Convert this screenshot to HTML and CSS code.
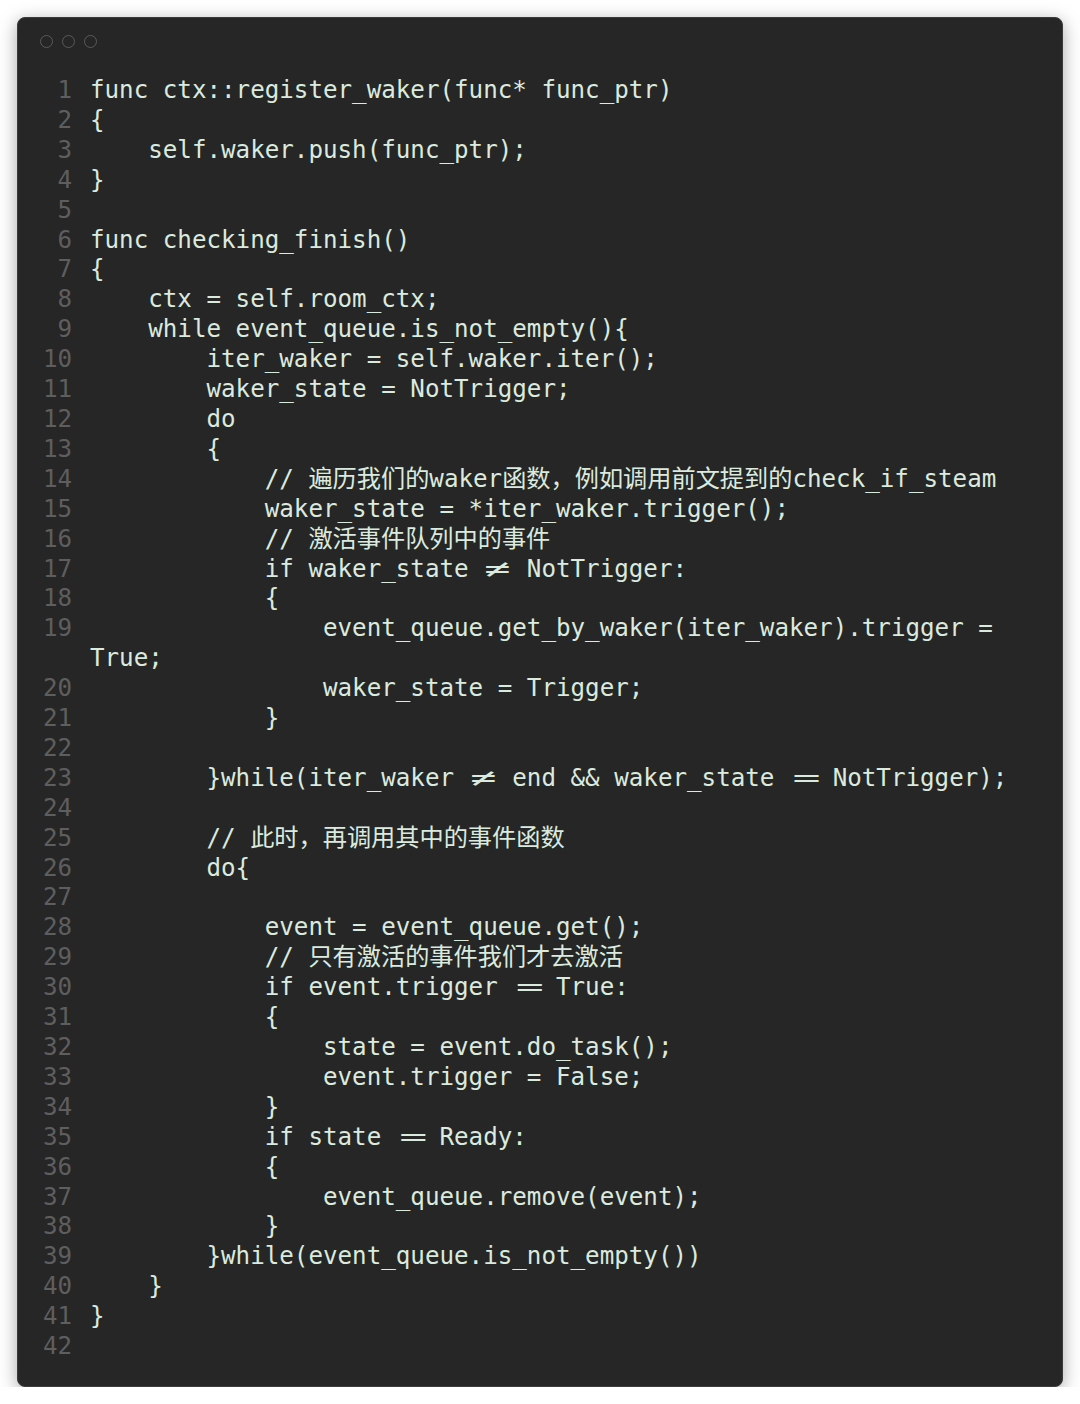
FILE: index.html
```html
<!DOCTYPE html>
<html lang="zh">
<head>
<meta charset="utf-8">
<title>code</title>
<link rel="stylesheet" href="styles.css">
</head>
<body>
<div class="window">
  <div class="titlebar">
    <span class="dot"></span><span class="dot"></span><span class="dot"></span>
  </div>
  <div class="code">
    <div class="row"><span class="n">1</span><span class="c">func ctx::register_waker(func* func_ptr)</span></div>
    <div class="row"><span class="n">2</span><span class="c">{</span></div>
    <div class="row"><span class="n">3</span><span class="c">    self.waker.push(func_ptr);</span></div>
    <div class="row"><span class="n">4</span><span class="c">}</span></div>
    <div class="row"><span class="n">5</span><span class="c"> </span></div>
    <div class="row"><span class="n">6</span><span class="c">func checking_finish()</span></div>
    <div class="row"><span class="n">7</span><span class="c">{</span></div>
    <div class="row"><span class="n">8</span><span class="c">    ctx = self.room_ctx;</span></div>
    <div class="row"><span class="n">9</span><span class="c">    while event_queue.is_not_empty(){</span></div>
    <div class="row"><span class="n">10</span><span class="c">        iter_waker = self.waker.iter();</span></div>
    <div class="row"><span class="n">11</span><span class="c">        waker_state = NotTrigger;</span></div>
    <div class="row"><span class="n">12</span><span class="c">        do</span></div>
    <div class="row"><span class="n">13</span><span class="c">        {</span></div>
    <div class="row"><span class="n">14</span><span class="c">            // 遍历我们的waker函数，例如调用前文提到的check_if_steam</span></div>
    <div class="row"><span class="n">15</span><span class="c">            waker_state = *iter_waker.trigger();</span></div>
    <div class="row"><span class="n">16</span><span class="c">            // 激活事件队列中的事件</span></div>
    <div class="row"><span class="n">17</span><span class="c">            if waker_state <span class="ne"><span class="g">≠</span></span> NotTrigger:</span></div>
    <div class="row"><span class="n">18</span><span class="c">            {</span></div>
    <div class="row"><span class="n">19</span><span class="c">                event_queue.get_by_waker(iter_waker).trigger = True;</span></div>
    <div class="row"><span class="n">20</span><span class="c">                waker_state = Trigger;</span></div>
    <div class="row"><span class="n">21</span><span class="c">            }</span></div>
    <div class="row"><span class="n">22</span><span class="c"> </span></div>
    <div class="row"><span class="n">23</span><span class="c">        }while(iter_waker <span class="ne"><span class="g">≠</span></span> end &amp;&amp; waker_state <span class="eq">==</span> NotTrigger);</span></div>
    <div class="row"><span class="n">24</span><span class="c"> </span></div>
    <div class="row"><span class="n">25</span><span class="c">        // 此时，再调用其中的事件函数</span></div>
    <div class="row"><span class="n">26</span><span class="c">        do{</span></div>
    <div class="row"><span class="n">27</span><span class="c"> </span></div>
    <div class="row"><span class="n">28</span><span class="c">            event = event_queue.get();</span></div>
    <div class="row"><span class="n">29</span><span class="c">            // 只有激活的事件我们才去激活</span></div>
    <div class="row"><span class="n">30</span><span class="c">            if event.trigger <span class="eq">==</span> True:</span></div>
    <div class="row"><span class="n">31</span><span class="c">            {</span></div>
    <div class="row"><span class="n">32</span><span class="c">                state = event.do_task();</span></div>
    <div class="row"><span class="n">33</span><span class="c">                event.trigger = False;</span></div>
    <div class="row"><span class="n">34</span><span class="c">            }</span></div>
    <div class="row"><span class="n">35</span><span class="c">            if state <span class="eq">==</span> Ready:</span></div>
    <div class="row"><span class="n">36</span><span class="c">            {</span></div>
    <div class="row"><span class="n">37</span><span class="c">                event_queue.remove(event);</span></div>
    <div class="row"><span class="n">38</span><span class="c">            }</span></div>
    <div class="row"><span class="n">39</span><span class="c">        }while(event_queue.is_not_empty())</span></div>
    <div class="row"><span class="n">40</span><span class="c">    }</span></div>
    <div class="row"><span class="n">41</span><span class="c">}</span></div>
    <div class="row"><span class="n">42</span><span class="c"> </span></div>
  </div>
</div>
</body>
</html>
```
FILE: styles.css
```css
html, body {
  margin: 0;
  padding: 0;
  background: #ffffff;
}

.window {
  box-sizing: border-box;
  margin: 17px 0 0 17px;
  width: 1046px;
  height: 1370px;
  background: #262626;
  border: 1px solid #3c3c3c;
  border-radius: 8px;
  box-shadow: 0 4px 18px rgba(0, 0, 0, 0.35);
  overflow: hidden;
}

.titlebar {
  box-sizing: border-box;
  height: 58px;
  padding: 17px 0 0 22px;
  display: flex;
  gap: 9px;
  align-items: flex-start;
}

.dot {
  box-sizing: border-box;
  width: 13px;
  height: 13px;
  border-radius: 50%;
  border: 1.3px solid #5a5a5a;
}

.code {
  display: flex;
  flex-direction: column;
  padding-left: 25px;
  font-family: "DejaVu Sans Mono", "Noto Sans CJK SC", monospace;
  font-size: 24.2px;
  line-height: 29.9px;
  color: #dbeadf;
}

.row {
  display: flex;
  align-items: flex-start;
}

.n {
  flex: none;
  width: 29px;
  text-align: right;
  color: #5e5e5e;
  margin-right: 18px;
}

.c {
  width: 945px;
  white-space: pre-wrap;
}

.ne {
  display: inline-block;
  width: 2ch;
  text-align: center;
}

.ne .g {
  display: inline-block;
  transform: scaleX(1.8);
}

.eq {
  display: inline-block;
  width: 2ch;
  text-align: center;
  letter-spacing: -3px;
  text-indent: 3px;
}
```
